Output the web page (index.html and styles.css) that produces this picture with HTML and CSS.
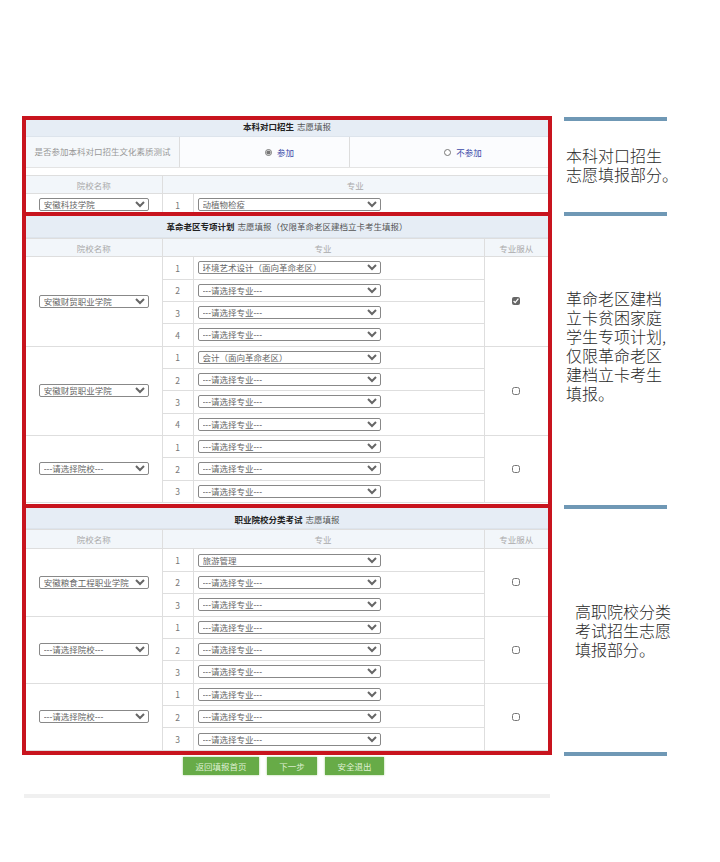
FILE: index.html

```html
<!DOCTYPE html>
<html lang="zh-CN">
<head>
  <meta charset="UTF-8">
  <title>志愿填报</title>
  <link rel="stylesheet" href="styles.css">
</head>
<body>
  <div class="page">
    <div class="main">
      <div class="forms">

        <section class="sec sec-one">
          <div class="sec-title"><b>本科对口招生</b> 志愿填报</div>
          <div class="test-row">
            <div class="test-label">是否参加本科对口招生文化素质测试</div>
            <label class="test-opt opt-a"><input type="radio" name="test" checked> <span>参加</span></label>
            <label class="test-opt opt-b"><input type="radio" name="test"> <span>不参加</span></label>
          </div>
          <table class="plan">
            <colgroup><col class="c-school"><col class="c-num"><col></colgroup>
            <tr class="head"><th>院校名称</th><th colspan="2">专业</th></tr>
            <tr>
              <td><select class="school"><option>安徽科技学院</option></select></td>
              <td class="num">1</td>
              <td><select class="major"><option>动植物检疫</option></select></td>
            </tr>
          </table>
        </section>

        <section class="sec sec-two">
          <div class="sec-title"><b>革命老区专项计划</b> 志愿填报（仅限革命老区建档立卡考生填报）</div>
          <table class="plan">
            <colgroup><col class="c-school"><col class="c-num"><col class="c-major"><col></colgroup>
            <tr class="head"><th>院校名称</th><th colspan="2">专业</th><th>专业服从</th></tr>
            <tr>
              <td rowspan="4"><select class="school"><option>安徽财贸职业学院</option></select></td>
              <td class="num">1</td>
              <td><select class="major"><option>环境艺术设计（面向革命老区）</option></select></td>
              <td rowspan="4" class="obey"><input type="checkbox" checked></td>
            </tr>
            <tr><td class="num">2</td><td><select class="major"><option>---请选择专业---</option></select></td></tr>
            <tr><td class="num">3</td><td><select class="major"><option>---请选择专业---</option></select></td></tr>
            <tr><td class="num">4</td><td><select class="major"><option>---请选择专业---</option></select></td></tr>
            <tr>
              <td rowspan="4"><select class="school"><option>安徽财贸职业学院</option></select></td>
              <td class="num">1</td>
              <td><select class="major"><option>会计（面向革命老区）</option></select></td>
              <td rowspan="4" class="obey"><input type="checkbox"></td>
            </tr>
            <tr><td class="num">2</td><td><select class="major"><option>---请选择专业---</option></select></td></tr>
            <tr><td class="num">3</td><td><select class="major"><option>---请选择专业---</option></select></td></tr>
            <tr><td class="num">4</td><td><select class="major"><option>---请选择专业---</option></select></td></tr>
            <tr>
              <td rowspan="3"><select class="school"><option>---请选择院校---</option></select></td>
              <td class="num">1</td>
              <td><select class="major"><option>---请选择专业---</option></select></td>
              <td rowspan="3" class="obey"><input type="checkbox"></td>
            </tr>
            <tr><td class="num">2</td><td><select class="major"><option>---请选择专业---</option></select></td></tr>
            <tr><td class="num">3</td><td><select class="major"><option>---请选择专业---</option></select></td></tr>
          </table>
        </section>

        <section class="sec sec-three">
          <div class="sec-title"><b>职业院校分类考试</b> 志愿填报</div>
          <table class="plan">
            <colgroup><col class="c-school"><col class="c-num"><col class="c-major"><col></colgroup>
            <tr class="head"><th>院校名称</th><th colspan="2">专业</th><th>专业服从</th></tr>
            <tr>
              <td rowspan="3"><select class="school"><option>安徽粮食工程职业学院</option></select></td>
              <td class="num">1</td>
              <td><select class="major"><option>旅游管理</option></select></td>
              <td rowspan="3" class="obey"><input type="checkbox"></td>
            </tr>
            <tr><td class="num">2</td><td><select class="major"><option>---请选择专业---</option></select></td></tr>
            <tr><td class="num">3</td><td><select class="major"><option>---请选择专业---</option></select></td></tr>
            <tr>
              <td rowspan="3"><select class="school"><option>---请选择院校---</option></select></td>
              <td class="num">1</td>
              <td><select class="major"><option>---请选择专业---</option></select></td>
              <td rowspan="3" class="obey"><input type="checkbox"></td>
            </tr>
            <tr><td class="num">2</td><td><select class="major"><option>---请选择专业---</option></select></td></tr>
            <tr><td class="num">3</td><td><select class="major"><option>---请选择专业---</option></select></td></tr>
            <tr>
              <td rowspan="3"><select class="school"><option>---请选择院校---</option></select></td>
              <td class="num">1</td>
              <td><select class="major"><option>---请选择专业---</option></select></td>
              <td rowspan="3" class="obey"><input type="checkbox"></td>
            </tr>
            <tr><td class="num">2</td><td><select class="major"><option>---请选择专业---</option></select></td></tr>
            <tr><td class="num">3</td><td><select class="major"><option>---请选择专业---</option></select></td></tr>
          </table>
        </section>

      </div>

      <div class="actions">
        <button class="btn btn-home">返回填报首页</button>
        <button class="btn btn-next">下一步</button>
        <button class="btn btn-exit">安全退出</button>
      </div>
      <div class="foot-bar"></div>
    </div>

    <aside class="notes">
      <div class="note note-one">本科对口招生<br>志愿填报部分。</div>
      <div class="note note-two">革命老区建档<br>立卡贫困家庭<br>学生专项计划,<br>仅限革命老区<br>建档立卡考生<br>填报。</div>
      <div class="note note-three">高职院校分类<br>考试招生志愿<br>填报部分。</div>
      <div class="note note-end"></div>
    </aside>
  </div>
</body>
</html>
```

FILE: styles.css

```css
body {
  margin: 0;
  background: #fff;
  color: #666;
  font-family: "Noto Sans CJK SC", "Noto Sans", sans-serif;
  font-size: 8.5px;
}

.page {
  display: flex;
  padding: 116px 0 0 22px;
}

.main {
  width: 530px;
}

.forms {
  border: 4px solid #c8141e;
}

.sec {
  overflow: hidden;
}

.sec + .sec {
  border-top: 4px solid #c8141e;
}

.sec-one {
  height: 92px;
}

.sec-two {
  height: 288px;
}

.sec-three {
  height: 243px;
  border-top-width: 5px;
}

.sec-title {
  display: flex;
  justify-content: center;
  align-items: center;
  gap: 3px;
  height: 22px;
  padding-bottom: 2px;
  background: #e6edf5;
  color: #555;
  border-bottom: 1px solid #dde4ec;
  box-sizing: border-box;
}

.sec-title b {
  color: #222;
}

.sec-one .sec-title {
  height: 17px;
  padding-bottom: 5px;
}

.sec-three .sec-title {
  height: 21px;
  padding: 1px 0 0;
}

.test-row {
  display: flex;
  height: 31px;
  margin-bottom: 7px;
  background: #fbfcfe;
  border-bottom: 1px solid #e4e4e4;
  box-sizing: border-box;
}

.test-label {
  width: 154px;
  line-height: 28px;
  text-align: center;
  color: #999;
  background: #f5f8fb;
  border-right: 1px solid #ddd;
  box-sizing: border-box;
}

.test-opt {
  display: flex;
  justify-content: center;
  align-items: center;
  gap: 5px;
  color: #3b4aa8;
}

.opt-a {
  width: 170px;
  padding-left: 30px;
  border-right: 1px solid #ddd;
  box-sizing: border-box;
}

.opt-b {
  flex: 1;
  padding-left: 28px;
}

.test-opt input {
  width: 7px;
  height: 7px;
  margin: 0;
  accent-color: #777;
}

.plan {
  width: 100%;
  table-layout: fixed;
  border-collapse: collapse;
}

.sec-two .plan {
  height: 265px;
}

.sec-three .plan {
  height: 222px;
}

.c-school {
  width: 136px;
}

.c-num {
  width: 31px;
}

.c-major {
  width: 291px;
}

.plan th,
.plan td {
  padding: 0;
  text-align: center;
  border: 1px solid #dedede;
}

.plan tr > :first-child {
  border-left: 0;
}

.plan tr > :last-child {
  border-right: 0;
}

.plan th {
  height: 17px;
  background: #f2f6fa;
  color: #aaa;
  font-weight: normal;
}

.sec-three .plan th {
  height: 18px;
}

.plan td {
  height: 21px;
  background: #fff;
}

.num {
  color: #777;
  background: #fcfcfc;
}

select {
  display: block;
  height: 13px;
  margin: 0 auto;
  padding: 0;
  border: 1px solid #888;
  border-radius: 2px;
  background: #fff;
  color: #666;
  font-family: "Liberation Sans", "Noto Sans CJK SC", sans-serif;
  font-size: 8.5px;
}

.school {
  width: 110px;
}

.major {
  width: 183px;
  margin-left: 4px;
}

.obey input {
  display: block;
  width: 8px;
  height: 8px;
  margin: 0 auto;
  accent-color: #666;
}

.actions {
  display: flex;
  gap: 8px;
  margin-top: 2px;
  padding-left: 161px;
}

.btn {
  height: 18px;
  padding: 0;
  border: 0;
  background: #67ab47;
  box-shadow: 0 0 2px #a4d08c;
  color: #dff0d4;
  font-family: inherit;
  font-size: 8.5px;
}

.btn-home {
  width: 76px;
}

.btn-next {
  width: 50px;
}

.btn-exit {
  width: 59px;
}

.foot-bar {
  height: 4px;
  margin: 19px 2px 0;
  background: #f0f0f0;
}

.notes {
  width: 103px;
  margin-left: 12px;
  padding-top: 1px;
  color: #2a2a2a;
  font-size: 16px;
  font-weight: 300;
  line-height: 19px;
  white-space: nowrap;
}

.note {
  border-top: 4px solid #6f98b5;
  box-sizing: border-box;
  padding-left: 2px;
}

.note-one {
  height: 95px;
  padding-top: 25px;
}

.note-two {
  height: 293px;
  padding-top: 73px;
}

.note-three {
  height: 247px;
  padding-top: 93px;
  padding-left: 11px;
}
```
